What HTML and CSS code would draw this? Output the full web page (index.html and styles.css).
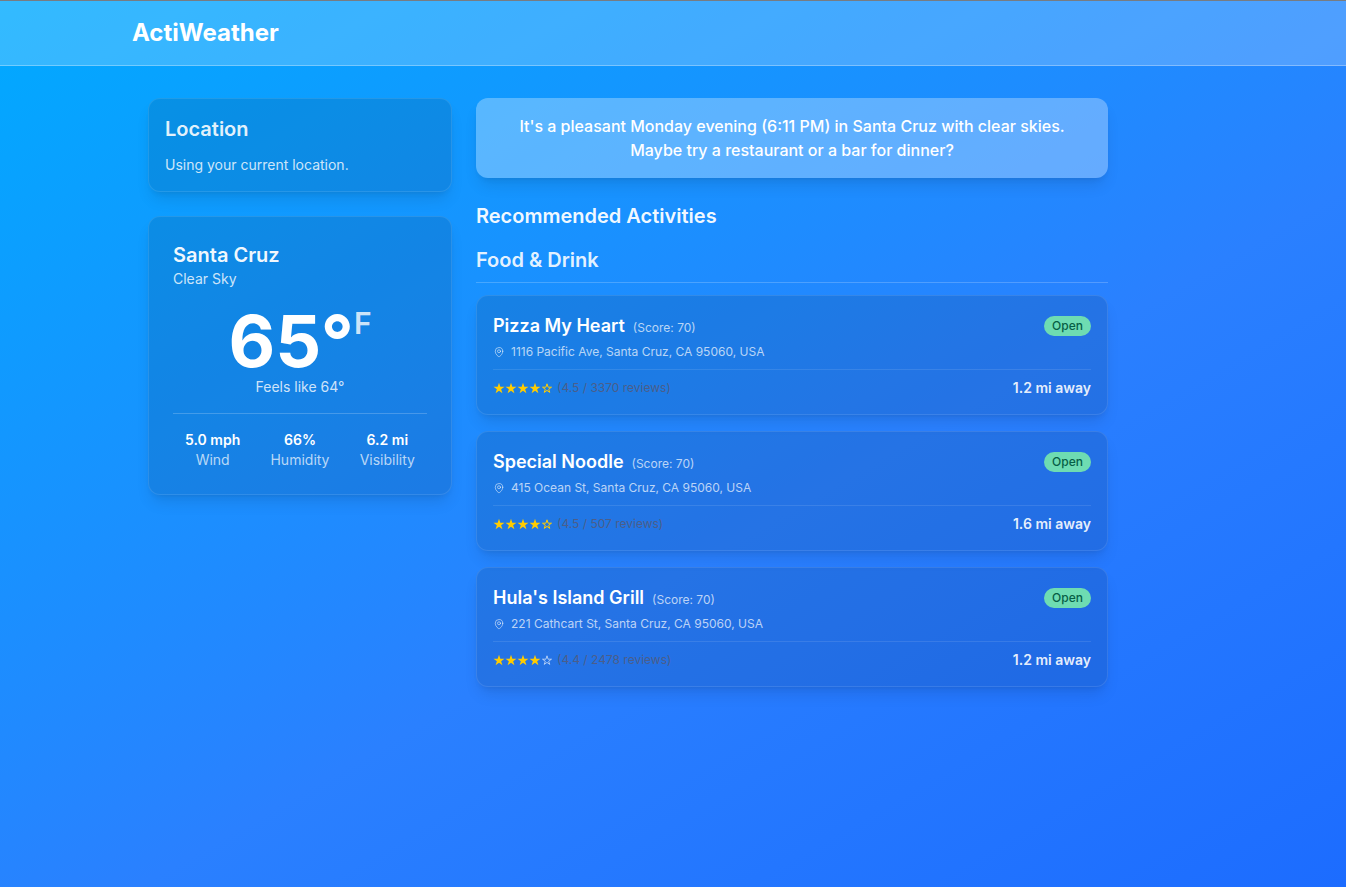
FILE: index.html
```html
<!DOCTYPE html>
<html lang="en">
<head>
<meta charset="utf-8">
<meta name="viewport" content="width=device-width, initial-scale=1">
<title>ActiWeather</title>
<link rel="stylesheet" href="styles.css">
</head>
<body>
<svg class="defs" width="0" height="0" aria-hidden="true">
  <symbol id="pin" viewBox="0 0 24 24"><path d="M15 10.5a3 3 0 1 1-6 0 3 3 0 0 1 6 0Z"/><path d="M19.5 10.5c0 7.142-7.5 11.25-7.5 11.25S4.500 17.642 4.500 10.500a7.500 7.500 0 1 1 15 0Z"/></symbol>
  <symbol id="star" viewBox="0 0 12 12"><path d="M6 .8 7.350 4.800H11.500L8.150 7.200 9.400 11.200 6 8.750 2.600 11.200 3.850 7.200.5 4.800H4.650Z"/></symbol>
  <symbol id="star-outline" viewBox="0 0 12 12"><path d="M6 1.800 7.050 5.200H10.500L7.700 7.200 8.750 10.400 6 8.400 3.250 10.400 4.300 7.200 1.500 5.200H4.950Z" fill="none" stroke="currentColor" stroke-width="1"/></symbol>
</svg>
<header class="header">
  <div class="container"><h1 class="brand">ActiWeather</h1></div>
</header>
<main class="container layout">
  <aside class="sidebar">
    <section class="card location">
      <h2 class="heading heading-soft">Location</h2>
      <p class="location-text">Using your current location.</p>
    </section>
    <section class="card weather">
      <h2 class="heading">Santa Cruz</h2>
      <p class="condition">Clear Sky</p>
      <div class="temperature"><span>65°</span><span class="unit">F</span></div>
      <p class="feels">Feels like 64°</p>
      <dl class="stats">
        <div class="stat"><dd>5.0 mph</dd><dt>Wind</dt></div>
        <div class="stat"><dd>66%</dd><dt>Humidity</dt></div>
        <div class="stat"><dd>6.2 mi</dd><dt>Visibility</dt></div>
      </dl>
    </section>
  </aside>
  <section class="content">
    <p class="banner">It's a pleasant Monday evening (6:11 PM) in Santa Cruz with clear skies.<br>Maybe try a restaurant or a bar for dinner?</p>
    <h2 class="heading">Recommended Activities</h2>
    <h3 class="heading heading-soft category">Food &amp; Drink</h3>
    <div class="places">
      <article class="card place">
        <div class="place-top"><h4 class="name">Pizza My Heart</h4><span class="score">(Score: 70)</span><span class="badge">Open</span></div>
        <p class="address"><svg class="pin"><use href="#pin"/></svg>1116 Pacific Ave, Santa Cruz, CA 95060, USA</p>
        <div class="place-bottom">
          <span class="stars" role="img" aria-label="4.5 stars"><svg><use href="#star"/></svg><svg><use href="#star"/></svg><svg><use href="#star"/></svg><svg><use href="#star"/></svg><svg><use href="#star-outline"/></svg></span>
          <span class="reviews">(4.5 / 3370 reviews)</span><span class="distance">1.2 mi away</span>
        </div>
      </article>
      <article class="card place">
        <div class="place-top"><h4 class="name">Special Noodle</h4><span class="score">(Score: 70)</span><span class="badge">Open</span></div>
        <p class="address"><svg class="pin"><use href="#pin"/></svg>415 Ocean St, Santa Cruz, CA 95060, USA</p>
        <div class="place-bottom">
          <span class="stars" role="img" aria-label="4.5 stars"><svg><use href="#star"/></svg><svg><use href="#star"/></svg><svg><use href="#star"/></svg><svg><use href="#star"/></svg><svg><use href="#star-outline"/></svg></span>
          <span class="reviews">(4.5 / 507 reviews)</span><span class="distance">1.6 mi away</span>
        </div>
      </article>
      <article class="card place">
        <div class="place-top"><h4 class="name">Hula's Island Grill</h4><span class="score">(Score: 70)</span><span class="badge">Open</span></div>
        <p class="address"><svg class="pin"><use href="#pin"/></svg>221 Cathcart St, Santa Cruz, CA 95060, USA</p>
        <div class="place-bottom">
          <span class="stars" role="img" aria-label="4.4 stars"><svg><use href="#star"/></svg><svg><use href="#star"/></svg><svg><use href="#star"/></svg><svg><use href="#star"/></svg><svg class="star-empty"><use href="#star-outline"/></svg></span>
          <span class="reviews">(4.4 / 2478 reviews)</span><span class="distance">1.2 mi away</span>
        </div>
      </article>
    </div>
  </section>
</main>
</body>
</html>
```

FILE: styles.css
```css
*, *::before, *::after { box-sizing: border-box; }

html { background: linear-gradient(150deg, #00aaff 0%, #2a80ff 58%, #1c6cff 100%) fixed; min-height: 100%; }

body {
  margin: 0;
  border-top: 1px solid #777c82;
  color: #fff;
  font-family: Inter, "Liberation Sans", sans-serif;
  font-size: 14px;
  line-height: 20px;
}

h1, h2, h3, h4, p, dl, dd { margin: 0; }

.defs { position: absolute; }

.container { max-width: 992px; margin-left: 132px; }

.header {
  padding: 16px 0;
  background: rgba(255, 255, 255, 0.2);
  border-bottom: 1px solid rgba(255, 255, 255, 0.3);
}

.brand { font-size: 24px; line-height: 32px; font-weight: 700; }

.layout {
  display: grid;
  grid-template-columns: repeat(3, minmax(0, 1fr));
  gap: 24px;
  align-items: start;
  padding: 32px 16px;
}

.sidebar { display: flex; flex-direction: column; gap: 24px; }
.content { grid-column: span 2; }

.card {
  padding: 16px;
  background: rgba(0, 0, 0, 0.1);
  border: 1px solid rgba(255, 255, 255, 0.1);
  border-radius: 12px;
  box-shadow: 0 10px 15px -3px rgba(0, 0, 0, 0.1), 0 4px 6px -4px rgba(0, 0, 0, 0.1);
}

.heading { font-size: 20px; line-height: 28px; font-weight: 600; color: rgba(255, 255, 255, 0.95); }
.heading-soft { color: rgba(255, 255, 255, 0.9); }

.location .heading { margin-bottom: 12px; }
.location-text { color: rgba(255, 255, 255, 0.8); }

.weather { padding: 24px; }
.condition { color: rgba(255, 255, 255, 0.8); }

.temperature {
  display: flex;
  justify-content: center;
  margin-top: 16px;
  font-size: 72px;
  line-height: 72px;
  font-weight: 700;
}
.unit { font-size: 30px; line-height: 36px; font-weight: 600; color: rgba(255, 255, 255, 0.8); }

.feels { text-align: center; color: rgba(255, 255, 255, 0.8); }

.stats {
  display: grid;
  grid-template-columns: repeat(3, minmax(0, 1fr));
  gap: 8px;
  margin-top: 16px;
  padding-top: 16px;
  border-top: 1px solid rgba(255, 255, 255, 0.2);
  text-align: center;
}
.stat dd { font-weight: 600; }
.stat dt { color: rgba(255, 255, 255, 0.7); }

.banner {
  margin-bottom: 24px;
  padding: 16px;
  border-radius: 12px;
  background: rgba(255, 255, 255, 0.3);
  box-shadow: 0 10px 15px -3px rgba(0, 0, 0, 0.1), 0 4px 6px -4px rgba(0, 0, 0, 0.1);
  text-align: center;
  font-size: 16px;
  line-height: 24px;
  font-weight: 500;
}

.category {
  margin: 16px 0 12px;
  padding-bottom: 8px;
  border-bottom: 1px solid rgba(255, 255, 255, 0.2);
}

.places { display: flex; flex-direction: column; gap: 16px; }

.place-top { display: flex; align-items: center; gap: 8px; }
.name { font-size: 18px; line-height: 28px; font-weight: 600; }
.score { padding-top: 4px; font-size: 12px; line-height: 16px; color: rgba(255, 255, 255, 0.7); }
.badge {
  margin-left: auto;
  padding: 2px 8px;
  border-radius: 10px;
  background: #6edcb2;
  color: #065f46;
  font-size: 12px;
  line-height: 16px;
  font-weight: 500;
}

.address {
  display: flex;
  align-items: center;
  gap: 6px;
  margin-top: 4px;
  font-size: 12px;
  line-height: 16px;
  color: rgba(255, 255, 255, 0.7);
}
.pin { width: 12px; height: 12px; fill: none; stroke: currentColor; stroke-width: 1.5; stroke-linecap: round; stroke-linejoin: round; }

.place-bottom {
  display: flex;
  align-items: center;
  margin-top: 9px;
  padding-top: 8px;
  border-top: 1px solid rgba(255, 255, 255, 0.1);
}
.stars { display: flex; margin-right: 4px; color: #ffcc00; }
.stars svg { width: 12px; height: 12px; fill: currentColor; }
.stars .star-empty { color: rgba(255, 255, 255, 0.6); }
.reviews { font-size: 12px; color: #4b5e8a; }
.distance { margin-left: auto; font-weight: 600; color: rgba(255, 255, 255, 0.9); }
```
